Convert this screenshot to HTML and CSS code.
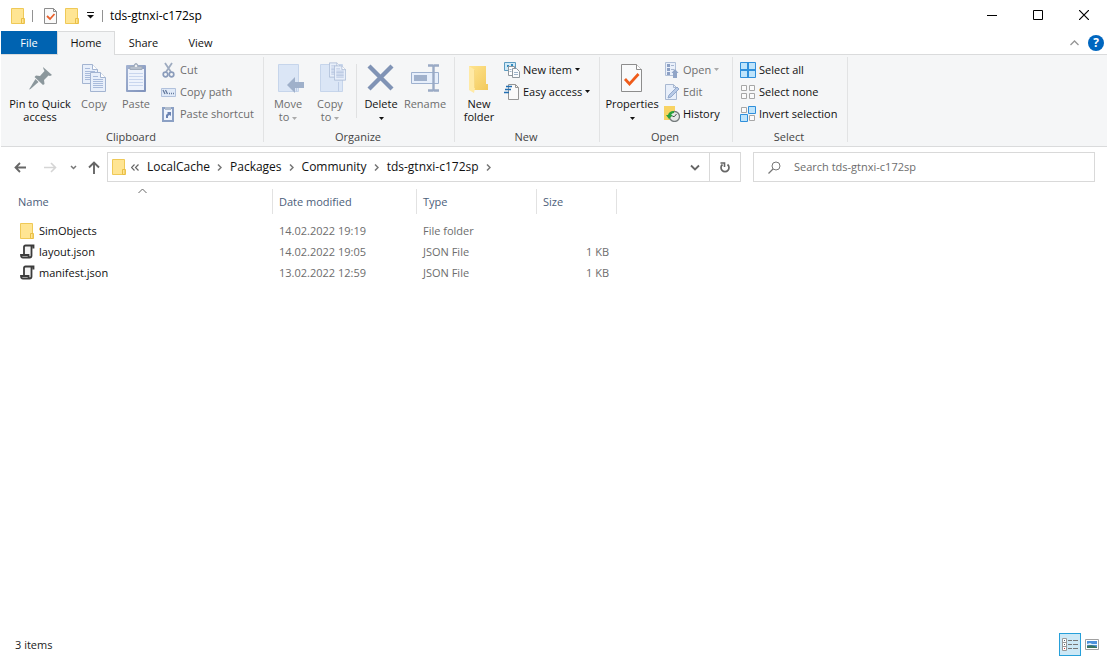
FILE: index.html
```html
<!DOCTYPE html>
<html lang="en">
<head>
<meta charset="utf-8">
<title>tds-gtnxi-c172sp</title>
<link rel="stylesheet" href="styles.css">
</head>
<body>
<svg class="defs" width="0" height="0" aria-hidden="true">
  <defs>
    <linearGradient id="clip" x1="0" y1="0" x2="1" y2="1"><stop offset="0" stop-color="#a3b3d2"/><stop offset="1" stop-color="#7f92bb"/></linearGradient>
    <linearGradient id="gold" x1="0" y1="0" x2="1" y2="1"><stop offset="0" stop-color="#ffe48f"/><stop offset="1" stop-color="#f2c95c"/></linearGradient>
    <symbol id="folder" viewBox="0 0 14 16"><path d="M.5.5h12v10h1v5H.5z" fill="#ffe593" stroke="#efc957"/><path d="M10.500 15.500v-5h2.500v5z" fill="#ffe593" stroke="#e9be45"/></symbol>
    <symbol id="script" viewBox="0 0 15 15"><path d="M4 1.500h8v9.500H4z" fill="#f4f4f4"/><path d="M13.500 4.500V1.500H5.500Q4 1.500 4 3V10.500M11.500 2v9.500q0 2-2 2H3Q1 13.500 1 11h7.500q0 2.500 1.500 2.500" fill="none" stroke="#3c3c3c" stroke-width="1.800"/></symbol>
    <symbol id="page" viewBox="0 0 16 20"><path d="M.5.5h10l5 5v14H.5z" fill="#e8effa" stroke="#a3b4d1"/><path d="M10.500.5v5h5" fill="#fff" stroke="#a3b4d1"/><path d="M3 4.500h5M3 7.500h10M3 9.500h10M3 11.500h10M3 13.500h10M3 15.500h10" stroke="#a9bbdb"/></symbol>
    <symbol id="caret" viewBox="0 0 5 3"><path d="M0 0h5L2.500 3z" fill="currentColor"/></symbol>
    <symbol id="crumb" viewBox="0 0 5 7"><path d="M1 .5l3 3-3 3" fill="none" stroke="#777" stroke-width="1.500"/></symbol>
  </defs>
</svg>
<div class="window">
  <header class="titlebar">
    <svg class="title-folder" width="14" height="16"><use href="#folder"/></svg>
    <span class="title-rule"></span>
    <button class="quick" aria-label="Properties"><svg width="13" height="16"><path d="M.5.500h9l3 3v12H.5z" fill="#fafafa" stroke="#8d8d8d"/><path d="M9.500.500v3h3" fill="none" stroke="#8d8d8d"/><path d="M3 8l3 3 4.500-5" fill="none" stroke="#e8602c" stroke-width="1.800"/></svg></button>
    <button class="quick" aria-label="New folder"><svg width="14" height="16"><use href="#folder"/></svg></button>
    <button class="quick" aria-label="Customize toolbar"><svg width="7" height="7"><path d="M0 .5h7" stroke="#111"/><path d="M0 3h7L3.500 6.500z" fill="#111"/></svg></button>
    <span class="title-rule title-rule-last"></span>
    <h1 class="title">tds-gtnxi-c172sp</h1>
    <div class="controls">
      <button aria-label="Minimize"><svg width="10" height="11"><path d="M0 5.500h10" stroke="#000"/></svg></button>
      <button aria-label="Maximize"><svg width="10" height="10"><path d="M.5.500h9v9h-9z" fill="none" stroke="#000"/></svg></button>
      <button aria-label="Close"><svg width="10" height="10"><path d="M0 0l10 10M10 0L0 10" stroke="#000" stroke-width="1.200"/></svg></button>
    </div>
  </header>

  <nav class="tabs">
    <button class="tab tab-file">File</button>
    <button class="tab tab-home">Home</button>
    <button class="tab">Share</button>
    <button class="tab">View</button>
    <button class="collapse" aria-label="Minimize the ribbon"><svg width="9" height="6"><path d="M.5 5l4-4 4 4" fill="none" stroke="#959595" stroke-width="1.300"/></svg></button>
    <button class="help" aria-label="Help">?</button>
  </nav>

  <section class="ribbon">
    <div class="group clipboard">
      <div class="tools">
        <button class="big pin"><svg width="32" height="32" viewBox="0 0 32 32"><g fill="#8b979c"><path d="M19 5l9 8-2 1-1.500-.5-4.500 4.500.5 4-1.500 1-8.500-8 1.500-1.500 4 .5 4.500-5-1-2z"/><path d="M11.500 17l3 3-8 7L5 27.500z"/></g></svg><span>Pin to Quick<br>access</span></button>
        <button class="big off"><svg width="32" height="32"><use href="#page" x="4" y="2" width="16" height="20"/><use href="#page" x="12" y="10" width="16" height="20"/></svg><span>Copy</span></button>
        <button class="big off"><svg width="32" height="32"><rect x="6" y="3" width="20" height="27" rx="1" fill="url(#clip)"/><path d="M8 7h16v21H8z" fill="#eef3fc"/><path d="M9 11.500h14M9 14.500h14M9 17.500h14M9 20.500h14M9 23.500h14" stroke="#c9d6ee"/><path d="M10 7.500v-3h4Q14 1.500 16 1.500t2 3h4v3z" fill="#b6bfcc" stroke="#a0abba"/><circle cx="16" cy="4" r="1" fill="#fff"/></svg><span>Paste</span></button>
        <div class="smalls">
          <button class="small off"><svg width="16" height="16"><path d="M4 1l6 9M11 1l-6 9" stroke="#9eabc0" stroke-width="1.800"/><circle cx="4.500" cy="12.500" r="2.300" fill="none" stroke="#8b9cbb" stroke-width="1.700"/><circle cx="10.500" cy="12.500" r="2.300" fill="none" stroke="#8b9cbb" stroke-width="1.700"/></svg>Cut</button>
          <button class="small off"><svg width="16" height="16"><path d="M.5 4.500h14v8H.5z" fill="#e0eaf8" stroke="#b1c1dc"/><path d="M2 6l2 4M4.500 6l2 4M8 9.500h1M10 9.500h1M12 9.500h1" stroke="#64799c" stroke-width="1.300"/></svg>Copy path</button>
          <button class="small off"><svg width="16" height="16"><path d="M1 1h12v15H1z" fill="#8ba0c4"/><path d="M3 3h8v11H3z" fill="#eff4fd"/><path d="M4 1h6v3H4z" fill="#b1bdce"/><path d="M5 12V9l2-2-1-1h4v4L8.500 9 7 10v2z" fill="#6b83b3"/></svg>Paste shortcut</button>
        </div>
      </div>
      <h2>Clipboard</h2>
    </div>

    <div class="group organize">
      <div class="tools">
        <button class="big off"><svg width="32" height="32"><path d="M6.500 2.500h20v27h-20z" fill="#dbe6f6" stroke="#c6d5eb"/><path d="M24.500 23v6.500" stroke="#bdcce5"/><path d="M15 23l8-8v5h9v6h-9v5z" fill="#9fb0ca"/></svg><span>Move<br>to <svg class="caret" width="5" height="3"><use href="#caret"/></svg></span></button>
        <button class="big off"><svg width="32" height="32"><path d="M6.500 2.500h22v27h-22z" fill="#dbe6f6" stroke="#c6d5eb"/><path d="M24.500 20v9.500" stroke="#bdcce5"/><use href="#page" x="15" y="0" width="12" height="16"/><use href="#page" x="20" y="3" width="12" height="16"/></svg><span>Copy<br>to <svg class="caret" width="5" height="3"><use href="#caret"/></svg></span></button>
        <span class="tool-rule"></span>
        <button class="big"><svg width="32" height="32"><path d="M4 4l23 23M27 4L4 27" stroke="#8093b5" stroke-width="4.300"/></svg><span>Delete<br><svg class="caret" width="5" height="3"><use href="#caret"/></svg></span></button>
        <button class="big off rename"><svg width="32" height="32"><path d="M2.500 10.500h27v11h-27z" fill="#e7effb" stroke="#9eb1cf"/><path d="M5 13h13v6H5z" fill="#a0b1cc"/><path d="M19 3.500h4.500l1 1 1-1H30M24.500 4v24M19 28.500h4.500l1-1 1 1H30" fill="none" stroke="#9aaac5" stroke-width="2.400"/></svg><span>Rename</span></button>
      </div>
      <h2>Organize</h2>
    </div>

    <div class="group new">
      <div class="tools">
        <button class="big"><svg width="32" height="32"><path d="M6 4h17v18h2v6H8z" fill="url(#gold)"/><path d="M6 4l6 4v18l-1 5-5-3z" fill="#ffeaa6"/><path d="M11.500 8v18" stroke="#f7d983"/></svg><span>New<br>folder</span></button>
        <div class="smalls">
          <button class="small"><svg width="16" height="16"><path d="M.5.500h11v8H.5z" fill="#d1eaf7" stroke="#5b9bc1"/><path d="M3 3h2v2H3zM7 2h2v3H7z" fill="#348cc0"/><path d="M4.500 4.500h6v9h-6z" fill="#fff" stroke="#8f979e"/><path d="M8.500 6.500h4l3 3v6h-7z" fill="#f9fbfd" stroke="#8f979e"/><path d="M5.500 7.500h2M5.500 9.500h2M10 10.500h4M10 12.500h4" stroke="#9fb4c9"/></svg>New item<svg class="caret" width="5" height="3"><use href="#caret"/></svg></button>
          <button class="small"><svg width="16" height="16"><path d="M4.500.500h7l3 3v12h-10z" fill="#fafafa" stroke="#969696"/><path d="M11.500.500v3h3" fill="none" stroke="#969696"/><path d="M2 2.500h6M1 5.500h6M0 8.500h5" stroke="#216eb1" stroke-width="1.300"/></svg>Easy access<svg class="caret" width="5" height="3"><use href="#caret"/></svg></button>
        </div>
      </div>
      <h2>New</h2>
    </div>

    <div class="group open">
      <div class="tools">
        <button class="big props"><svg width="32" height="32"><path d="M5.500 2.500h15l5 5v22h-20z" fill="#f9fafb" stroke="#8d8d8d"/><path d="M20.500 2.500v5h5" fill="#fff" stroke="#8d8d8d"/><path d="M9 17l4.500 5 9-10" fill="none" stroke="#ef5c1b" stroke-width="2.700"/></svg><span>Properties<br><svg class="caret" width="5" height="3"><use href="#caret"/></svg></span></button>
        <div class="smalls">
          <button class="small off"><svg width="16" height="16"><path d="M1.500.500h10v13h-10z" fill="#eaf0fa" stroke="#b1c0d8"/><path d="M3 2h3v3H3zM3 6h3v3H3zM3 10h3v3H3z" fill="#8ca0c4"/><path d="M7 3.500h3M7 7.500h3" stroke="#a7b6d0"/><path d="M9 16v-5H7.500L11 7l3.500 4H13v5z" fill="#91a5c7"/></svg>Open<svg class="caret" width="5" height="3"><use href="#caret"/></svg></button>
          <button class="small off"><svg width="16" height="16"><path d="M1.500.500h8l3 3v12h-11z" fill="#e8effa" stroke="#a8b8d1"/><path d="M9.500.500v3h3" fill="none" stroke="#a8b8d1"/><path d="M4 14l1-3 8-8 2 2-8 8z" fill="#b8cae6" stroke="#93a9cc"/></svg>Edit</button>
          <button class="small"><svg width="16" height="16"><path d="M0 0h11v14H0z" fill="#f8d363"/><circle cx="10.500" cy="10.500" r="5" fill="#e6e8e8" stroke="#747b7c" stroke-width="1.300"/><path d="M10.500 10.500l2-2.500M10.500 10.500h-2" stroke="#4b5050"/><path d="M2 9h2q1-4 6-4v2q-2 0-3 2h2l-4 4z" fill="#2aa03d"/></svg>History</button>
        </div>
      </div>
      <h2>Open</h2>
    </div>

    <div class="group select">
      <div class="tools">
        <div class="smalls">
          <button class="small"><svg width="16" height="16"><path d="M.5.500h15v15H.5z" fill="#bfe4fb" stroke="#2f8fdb"/><path d="M8 0v16M0 8h16" stroke="#2f8fdb" stroke-width="2"/></svg>Select all</button>
          <button class="small"><svg width="16" height="16"><path d="M1.500 1.500h5v5h-5zM9.500 1.500h5v5h-5zM1.500 9.500h5v5h-5zM9.500 9.500h5v5h-5z" fill="#fbfbfb" stroke="#a7a7a7"/></svg>Select none</button>
          <button class="small"><svg width="16" height="16"><path d="M1.500 1.500h5v5h-5zM9.500 9.500h5v5h-5z" fill="#fbfbfb" stroke="#a7a7a7"/><path d="M8.500.500h7v7h-7zM.5 8.500h7v7h-7z" fill="#bfe4fb" stroke="#2f8fdb"/></svg>Invert selection</button>
        </div>
      </div>
      <h2>Select</h2>
    </div>
  </section>

  <div class="navbar">
    <button class="nav-btn back" aria-label="Back"><svg width="13" height="11"><path d="M12 5.500H1.500M6 1L1.500 5.500 6 10" fill="none" stroke="#666" stroke-width="1.800"/></svg></button>
    <button class="nav-btn forward" aria-label="Forward"><svg width="13" height="11"><path d="M0 5.500h11.500M7 1l4.500 4.500L7 10" fill="none" stroke="#d5d5d5" stroke-width="1.600"/></svg></button>
    <button class="nav-btn recent" aria-label="Recent locations"><svg width="7" height="5"><path d="M1 1l2.500 2.500L6 1" fill="none" stroke="#777" stroke-width="1.500"/></svg></button>
    <button class="nav-btn up" aria-label="Up"><svg width="12" height="13"><path d="M6 13V1.500M1 6.500l5-5 5 5" fill="none" stroke="#666" stroke-width="1.900"/></svg></button>
    <div class="address">
      <svg class="address-folder" width="14" height="16"><use href="#folder"/></svg>
      <button class="overflow" aria-label="Earlier locations"><svg width="8" height="7"><path d="M3.500.500l-3 3 3 3M7.500.500l-3 3 3 3" fill="none" stroke="#666" stroke-width="1.200"/></svg></button>
      <button class="crumb">LocalCache</button><svg width="5" height="7"><use href="#crumb"/></svg>
      <button class="crumb">Packages</button><svg width="5" height="7"><use href="#crumb"/></svg>
      <button class="crumb">Community</button><svg width="5" height="7"><use href="#crumb"/></svg>
      <button class="crumb">tds-gtnxi-c172sp</button><svg width="5" height="7"><use href="#crumb"/></svg>
      <button class="history" aria-label="Previous locations"><svg width="10" height="7"><path d="M1 1.500l4 4 4-4" fill="none" stroke="#666" stroke-width="1.800"/></svg></button>
      <button class="refresh" aria-label="Refresh"><svg width="12" height="13"><path d="M8.500 3.500a4 4 0 1 1-5 0" fill="none" stroke="#666" stroke-width="1.700"/><path d="M1.500 2h4v4" fill="none" stroke="#666" stroke-width="1.600"/></svg></button>
    </div>
    <label class="search">
      <svg width="13" height="13"><circle cx="8" cy="5" r="4" fill="none" stroke="#777"/><path d="M5 8l-4.500 4.500" stroke="#777" stroke-width="1.200"/></svg>
      <input type="text" aria-label="Search" placeholder="Search tds-gtnxi-c172sp">
    </label>
  </div>

  <main class="files">
    <table>
      <thead>
        <tr>
          <th class="col-name"><div>Name<svg class="sort" width="9" height="6"><path d="M.5 5l4-4 4 4" fill="none" stroke="#666"/></svg></div></th>
          <th class="col-date"><div>Date modified</div></th>
          <th class="col-type"><div>Type</div></th>
          <th class="col-size"><div>Size</div></th>
        </tr>
      </thead>
      <tbody>
        <tr><td><span class="file"><svg width="15" height="16"><use href="#folder" width="14" height="16"/></svg>SimObjects</span></td><td>14.02.2022 19:19</td><td>File folder</td><td class="size"></td></tr>
        <tr><td><span class="file"><svg width="15" height="15"><use href="#script"/></svg>layout.json</span></td><td>14.02.2022 19:05</td><td>JSON File</td><td class="size">1 KB</td></tr>
        <tr><td><span class="file"><svg width="15" height="15"><use href="#script"/></svg>manifest.json</span></td><td>13.02.2022 12:59</td><td>JSON File</td><td class="size">1 KB</td></tr>
      </tbody>
    </table>
  </main>

  <footer class="status">
    <span>3 items</span>
    <div class="views">
      <button class="view view-on" aria-label="Details"><svg width="16" height="13"><path d="M.5.500h4v12h-4zM.5 4.500h4M.5 8.500h4" fill="#fff" stroke="#999"/><path d="M2 2.500h1M2 6.500h1" stroke="#567"/><path d="M2 10.500h1" stroke="#c33"/><path d="M6 2.500h4M11 2.500h5M6 6.500h4M11 6.500h5M6 10.500h4M11 10.500h5" stroke="#777"/></svg></button>
      <button class="view" aria-label="Large thumbnails"><svg width="14" height="11"><path d="M.5.500h13v10H.5z" fill="#fff" stroke="#a0a0a0"/><path d="M2 2h10v7H2z" fill="#4c91dc"/><path d="M2 5l3-1 2 1h5v1H2z" fill="#e0effc"/><path d="M2 7q5-2 10 1v1H2z" fill="#39735f"/></svg></button>
    </div>
  </footer>
</div>
</body>
</html>
```
FILE: styles.css
```css
* { box-sizing: border-box; }
body, h1, h2 { margin: 0; }
body { background: #fff; color: #111; font: 11px/13px "Open Sans", "Noto Sans", sans-serif; }
button { display: flex; align-items: center; justify-content: center; padding: 0; border: 0; background: none; color: inherit; font: inherit; white-space: nowrap; }
svg { display: block; flex: none; }
h1, h2, th { font: inherit; }
.defs { position: absolute; }
.window { display: flex; flex-direction: column; min-height: 100vh; padding: 0 1px; }

.titlebar { display: flex; align-items: center; height: 31px; padding-left: 10px; }
.title-rule { width: 1px; height: 12px; margin: 0 11px 0 7px; background: #929292; }
.title-rule-last { margin: 0 7px 0 8px; }
.quick + .quick { margin-left: 8px; }
.title { flex: 1; color: #000; font-size: 12px; }
.controls { display: flex; align-self: stretch; padding-bottom: 1px; }
.controls button { width: 46px; }

.tabs { display: flex; height: 24px; border-bottom: 1px solid #dadbdc; }
.tab { width: 57px; }
.tab-file { width: 56px; background: #0063b1; color: #fff; }
.tab-home { width: 58px; margin-bottom: -1px; padding-bottom: 2px; border: 1px solid #dadbdc; border-bottom: 0; background: #f5f6f7; }
.collapse { width: 18px; margin-left: auto; }
.help { align-self: center; width: 16px; height: 16px; margin: 0 3px 0 5px; border-radius: 50%; background: #0066bf; color: #fff; font-size: 12px; font-weight: 700; }

.ribbon { display: flex; height: 92px; border-bottom: 1px solid #dadbdc; background: #f5f6f7; }
.group { display: flex; flex-direction: column; position: relative; padding-top: 4px; }
.group::after { content: ""; position: absolute; top: 2px; right: 0; bottom: 4px; width: 1px; background: #e2e3e4; }
.clipboard { width: 263px; }
.organize { width: 191px; }
.new { width: 145px; }
.open { width: 133px; }
.select { width: 115px; }
.tools { display: flex; height: 71px; padding: 0 3px; }
.clipboard .tools { padding-left: 6px; }
.open .tools { padding-left: 5px; }
.group h2 { padding-right: 3px; color: #444; text-align: center; }
.big { flex-direction: column; justify-content: flex-start; gap: 3px; width: 42px; padding-top: 3px; line-height: 13px; }
.pin { width: 66px; }
.rename { width: 46px; }
.props { width: 54px; }
.off { color: #6d6d6d; }
.caret { display: inline-block; vertical-align: middle; }
.off .caret { color: #aaa; }
.tool-rule { width: 1px; height: 54px; margin: 5px 3px 0 5px; background: #e0e1e2; }
.smalls { display: flex; flex-direction: column; }
.small { justify-content: flex-start; gap: 3px; height: 22px; padding: 0 0 2px 4px; }
.small svg:first-child { margin-top: 2px; }
.open .small { padding-left: 5px; }

.navbar { display: flex; align-items: center; padding: 5px 12px 5px 13px; }
.nav-btn { height: 30px; }
.back { width: 13px; }
.forward { width: 13px; margin-left: 17px; }
.recent { width: 7px; margin-left: 13px; }
.up { width: 12px; margin: 0 7px 0 11px; }
.address { display: flex; flex: 1; align-items: center; height: 30px; padding-left: 4px; border: 1px solid #d9d9d9; color: #111; }
.overflow { margin: 0 8px 0 5px; }
.crumb { padding-bottom: 2px; font-size: 12px; }
.crumb + svg { margin: 0 8px 0 7px; }
.history { width: 28px; height: 28px; margin-left: auto; }
.refresh { width: 31px; height: 28px; border-left: 1px solid #d9d9d9; }
.search { display: flex; flex: 0 1 342px; align-items: center; gap: 13px; height: 30px; margin-left: 12px; padding: 0 14px; border: 1px solid #d9d9d9; }
.search input { flex: 1; min-width: 0; padding: 0 0 2px; border: 0; outline: 0; background: none; font: inherit; }
.search input::placeholder { color: #6d6d6d; opacity: 1; }

.files { flex: 1; }
table { table-layout: fixed; width: 616px; border-collapse: collapse; color: #6d6d6d; }
th { padding: 2px 0 6px; color: #4c607a; text-align: left; }
th div { position: relative; height: 25px; padding: 6px; border-right: 1px solid #e2e2e2; }
.col-name { width: 272px; }
.col-name div { padding-left: 17px; }
.col-date { width: 144px; }
.col-type { width: 120px; }
.col-size { width: 80px; }
.sort { position: absolute; top: -1px; left: 137px; }
td { height: 21px; padding: 0 6px; }
.file { display: flex; align-items: center; gap: 4px; padding-left: 13px; color: #111; }
.size { padding-right: 8px; text-align: right; }

.status { display: flex; align-items: center; justify-content: space-between; height: 25px; padding: 0 5px 0 14px; color: #222; }
.views { display: flex; gap: 1px; }
.view { width: 20px; height: 23px; }
.view-on { width: 22px; border: 1px solid #26a0da; background: #cce8f6; }
```
